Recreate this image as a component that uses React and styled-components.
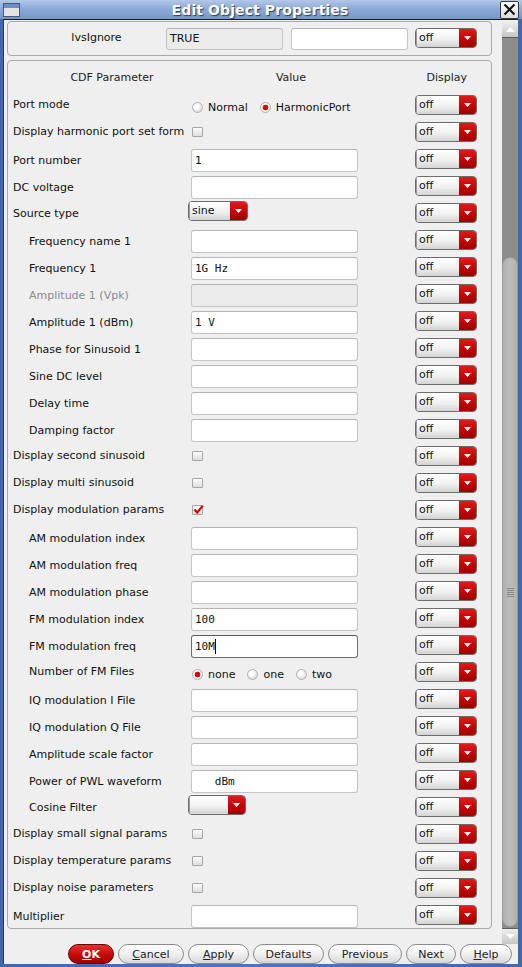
import React from "react";
import styled, { createGlobalStyle } from "styled-components";

const GlobalStyle = createGlobalStyle`
  html, body {
    margin: 0;
    padding: 0;
    background: #4470b5;
  }
  body {
    font-family: "DejaVu Sans", Verdana, sans-serif;
    font-size: 11px;
    color: #111;
  }
`;

const Window = styled.div`
  width: 522px;
  height: 967px;
  display: flex;
  flex-direction: column;
  background: linear-gradient(90deg, #3f69ad, #4a76ba 50%, #3f69ad);
  overflow: hidden;
`;

const TitleBar = styled.div`
  height: 20px;
  display: flex;
  align-items: center;
  padding: 0 3px;
  background: linear-gradient(#b3c8e8, #8eaad8 45%, #7595ca);
`;

const WinIcon = styled.div`
  width: 17px;
  height: 14px;
  box-sizing: border-box;
  border: 1px solid #4a5a78;
  background: linear-gradient(#6d8fc8 0 4px, #e4e4e4 4px);
`;

const Title = styled.div`
  flex: 1;
  text-align: center;
  color: #fff;
  font-weight: bold;
  font-size: 14px;
  text-shadow: 1px 1px 1px #2b3a55;
  letter-spacing: 0.1px;
`;

const CloseBtn = styled.div`
  width: 19px;
  height: 18px;
  box-sizing: border-box;
  border: 1px solid #3a3a3a;
  border-radius: 2px;
  background: linear-gradient(#ffffff, #dcdcdc);
  display: flex;
  align-items: center;
  justify-content: center;
`;

const Client = styled.div`
  flex: 1;
  margin: 0 4px 3px 3px;
  background: #efefef;
  border-top: 1px solid #1c1c1c;
  border-left: 1px solid #3a3a3a;
  display: flex;
  flex-direction: column;
`;

const Main = styled.div`
  height: 924px;
  display: flex;
  padding-top: 1px;
  box-sizing: border-box;
`;

const Content = styled.div`
  width: 485px;
  margin-left: 3px;
  display: flex;
  flex-direction: column;
  gap: 4px;
`;

const Panel = styled.div`
  border: 1px solid #a9a9a9;
  border-radius: 4px;
  padding: 0 5px;
`;

const TopPanel = styled(Panel)`
  height: 35px;
  box-sizing: border-box;
  display: grid;
  grid-template-columns: 153px 125px 124px 62px;
  align-items: center;
`;

const TopLabel = styled.div`
  text-align: center;
  padding-left: 14px;
  margin-top: -2px;
`;

const ParamPanel = styled(Panel)`
  padding-bottom: 0;
`;

const Header = styled.div`
  height: 30px;
  box-sizing: border-box;
  padding-top: 10px;
  line-height: 14px;
  display: grid;
  grid-template-columns: 198px 160px 1fr;
  color: #1c1c1c;
`;

const HeadCell = styled.div`
  text-align: ${(p) => p.$align || "center"};
  padding-right: ${(p) => (p.$align === "right" ? "19px" : "0")};
`;

const Row = styled.div`
  height: 27px;
  display: grid;
  grid-template-columns: 178px 224px 62px;
  align-items: center;
`;

const Label = styled.div`
  padding-left: ${(p) => (p.$indent ? "16px" : "0")};
  margin-top: ${(p) => p.$shift || 0}px;
  color: ${(p) => (p.$disabled ? "#8a8a8a" : "#111")};
  white-space: nowrap;
`;

const Field = styled.div`
  width: ${(p) => p.$w || 167}px;
  height: 23px;
  box-sizing: border-box;
  margin-top: 4px;
  border: 1px solid ${(p) => (p.$focus ? "#6e6e6e" : "#c4c4c4")};
  border-top-color: ${(p) => (p.$focus ? "#5a5a5a" : "#b4b4b4")};
  border-radius: 3px;
  background: ${(p) => (p.$disabled ? "#ebebeb" : "#fff")};
  padding-left: 3px;
  display: flex;
  align-items: center;
  font-family: ${(p) => (p.$mono ? '"DejaVu Sans Mono", monospace' : '"DejaVu Sans", sans-serif')};
  font-size: 11px;
  white-space: pre;
`;

const TopField = styled(Field)`
  width: 117px;
  height: 22px;
  margin-top: 0;
`;

const Caret = styled.span`
  width: 1px;
  height: 15px;
  background: #000;
`;

const SelectBox = styled.div`
  width: ${(p) => p.$w || 62}px;
  height: 20px;
  box-sizing: border-box;
  margin-left: ${(p) => p.$shift || 0}px;
  margin-top: ${(p) => p.$top || 0}px;
  display: flex;
  border: 1px solid #6c6c6c;
  border-radius: 4px;
  overflow: hidden;
`;

const SelectText = styled.span`
  flex: 1;
  padding-left: 2px;
  line-height: 18px;
  background: linear-gradient(#ffffff, #f1f1f1 55%, #d3d3d3);
  border-left: 1px solid #9a9a9a;
`;

const SelectArrow = styled.span`
  width: 17px;
  display: flex;
  align-items: center;
  justify-content: center;
  background: linear-gradient(#e21a1a, #c40404 55%, #9e0000);
`;

const RadioGroup = styled.div`
  display: flex;
  align-items: center;
  gap: 12px;
  margin-top: 5px;
  padding-left: 1px;
`;

const RadioItem = styled.span`
  display: flex;
  align-items: center;
  gap: 5px;
`;

const RadioDot = styled.span`
  width: 11px;
  height: 11px;
  box-sizing: border-box;
  border-radius: 50%;
  border: 1px solid #b0b0b0;
  background: ${(p) =>
    p.$on
      ? "radial-gradient(circle, #e00000 0 2.6px, #fafafa 3.2px, #e2e2e2 100%)"
      : "radial-gradient(circle at 40% 35%, #ffffff 0 2px, #e6e6e6 60%, #cfcfcf 100%)"};
`;

const CheckBox = styled.div`
  width: 11px;
  height: 10px;
  box-sizing: border-box;
  margin-left: 1px;
  margin-top: 1px;
  border: 1px solid #a6a6a6;
  border-radius: 1px;
  background: linear-gradient(#fcfcfc, #dedede);
  position: relative;
`;

const CheckMark = styled.svg`
  position: absolute;
  left: 0;
  top: -2px;
`;

const ScrollBar = styled.div`
  width: 16px;
  height: 922px;
  margin: 1px 0 0 10px;
  display: flex;
  flex-direction: column;
  background: #8c8c8c;
`;

const ScrollArrow = styled.div`
  height: 16px;
  flex: none;
  display: flex;
  align-items: center;
  justify-content: center;
  background: linear-gradient(#eeeeee, #c6c6c6);
  border-${(p) => (p.$down ? "top" : "bottom")}: 1px solid #5c5c5c;
  box-sizing: border-box;
`;

const ScrollGap = styled.div`
  height: 219px;
  flex: none;
`;

const Thumb = styled.div`
  flex: 1;
  margin-bottom: 1px;
  border-radius: 8px;
  border: 1px solid #9c9c9c;
  background: linear-gradient(90deg, #b0b0b0, #bdbdbd 50%, #b0b0b0);
  display: flex;
  align-items: center;
  justify-content: center;
`;

const Grip = styled.div`
  width: 7px;
  height: 9px;
  background: repeating-linear-gradient(#8a8a8a 0 1px, transparent 1px 2px);
`;

const ButtonBar = styled.div`
  flex: 1;
  display: flex;
  justify-content: flex-end;
  align-items: center;
  gap: 4px;
  padding-right: 6px;
`;

const Button = styled.div`
  width: ${(p) => p.$w}px;
  height: 20px;
  box-sizing: border-box;
  border: 1px solid ${(p) => (p.$primary ? "#6e0000" : "#8a8a8a")};
  border-radius: 10px;
  background: ${(p) =>
    p.$primary
      ? "linear-gradient(#e63030, #c60808 55%, #a00000)"
      : "linear-gradient(#ffffff, #f0f0f0 50%, #d6d6d6)"};
  color: ${(p) => (p.$primary ? "#fff" : "#222")};
  font-weight: ${(p) => (p.$primary ? "bold" : "normal")};
  display: flex;
  align-items: center;
  justify-content: center;
  font-size: 11px;
`;

const U = styled.span`
  text-decoration: underline;
`;

function Arrow({ color = "#fff", up }) {
  return (
    <svg width="9" height="5" viewBox="0 0 9 5">
      <path d={up ? "M0 5 L4.5 0 L9 5 Z" : "M0 0 L4.5 5 L9 0 Z"} fill={color} />
    </svg>
  );
}

function Select({ value = "off", w, shift, top }) {
  return (
    <SelectBox $w={w} $shift={shift} $top={top}>
      <SelectText>{value}</SelectText>
      <SelectArrow>
        <svg width="7" height="4" viewBox="0 0 7 4">
          <path d="M0 0 L3.5 4 L7 0 Z" fill="#fff" />
        </svg>
      </SelectArrow>
    </SelectBox>
  );
}

const rows = [
  { label: "Port mode", kind: "radio", options: ["Normal", "HarmonicPort"], on: 1 },
  { label: "Display harmonic port set form", kind: "check" },
  { label: "Port number", kind: "field", value: "1" },
  { label: "DC voltage", kind: "field" },
  { label: "Source type", kind: "select", value: "sine", w: 60 },
  { label: "Frequency name 1", kind: "field", indent: true },
  { label: "Frequency 1", kind: "field", indent: true, value: "1G Hz", mono: true },
  { label: "Amplitude 1 (Vpk)", kind: "field", indent: true, disabled: true },
  { label: "Amplitude 1 (dBm)", kind: "field", indent: true, value: "1 V", mono: true },
  { label: "Phase for Sinusoid 1", kind: "field", indent: true },
  { label: "Sine DC level", kind: "field", indent: true },
  { label: "Delay time", kind: "field", indent: true },
  { label: "Damping factor", kind: "field", indent: true },
  { label: "Display second sinusoid", kind: "check" },
  { label: "Display multi sinusoid", kind: "check" },
  { label: "Display modulation params", kind: "check", checked: true },
  { label: "AM modulation index", kind: "field", indent: true },
  { label: "AM modulation freq", kind: "field", indent: true },
  { label: "AM modulation phase", kind: "field", indent: true },
  { label: "FM modulation index", kind: "field", indent: true, value: "100", mono: true },
  { label: "FM modulation freq", kind: "field", indent: true, value: "10M", mono: true, focus: true },
  { label: "Number of FM Files", kind: "radio", indent: true, options: ["none", "one", "two"], on: 0 },
  { label: "IQ modulation I File", kind: "field", indent: true },
  { label: "IQ modulation Q File", kind: "field", indent: true },
  { label: "Amplitude scale factor", kind: "field", indent: true },
  { label: "Power of PWL waveform", kind: "field", indent: true, value: "   dBm", mono: true },
  { label: "Cosine Filter", kind: "select", indent: true, value: "", w: 58 },
  { label: "Display small signal params", kind: "check" },
  { label: "Display temperature params", kind: "check" },
  { label: "Display noise parameters", kind: "check" },
  { label: "Multiplier", kind: "field" },
];

function ValueCell({ row }) {
  if (row.kind === "field") {
    return (
      <Field $mono={row.mono} $disabled={row.disabled} $focus={row.focus}>
        {row.value}
        {row.focus && <Caret />}
      </Field>
    );
  }
  if (row.kind === "select") {
    return <Select value={row.value} w={row.w} shift={-3} top={-3} />;
  }
  if (row.kind === "check") {
    return (
      <div>
        <CheckBox>
          {row.checked && (
            <CheckMark width="11" height="11" viewBox="0 0 11 11">
              <path d="M1.5 5.5 L4.2 8.6 L9.8 1.6" fill="none" stroke="#d40000" strokeWidth="2.2" />
            </CheckMark>
          )}
        </CheckBox>
      </div>
    );
  }
  return (
    <RadioGroup>
      {row.options.map((o, i) => (
        <RadioItem key={o}>
          <RadioDot $on={i === row.on} />
          {o}
        </RadioItem>
      ))}
    </RadioGroup>
  );
}

export default function App() {
  return (
    <>
      <GlobalStyle />
      <Window>
        <TitleBar>
          <WinIcon />
          <Title>Edit Object Properties</Title>
          <CloseBtn>
            <svg width="13" height="13" viewBox="0 0 13 13">
              <path d="M1.5 1.5 L11.5 11.5 M11.5 1.5 L1.5 11.5" stroke="#111" strokeWidth="2" />
            </svg>
          </CloseBtn>
        </TitleBar>
        <Client>
          <Main>
            <Content>
              <TopPanel>
                <TopLabel>lvsIgnore</TopLabel>
                <TopField $disabled>TRUE</TopField>
                <TopField />
                <Select top={-2} />
              </TopPanel>
              <ParamPanel>
                <Header>
                  <HeadCell>CDF Parameter</HeadCell>
                  <HeadCell>Value</HeadCell>
                  <HeadCell $align="right">Display</HeadCell>
                </Header>
                {rows.map((row) => (
                  <Row key={row.label}>
                    <Label
                      $indent={row.indent}
                      $disabled={row.disabled}
                      $shift={row.kind === "field" ? 4 : row.kind === "select" ? 2 : 0}
                    >
                      {row.label}
                    </Label>
                    <ValueCell row={row} />
                    <Select />
                  </Row>
                ))}
              </ParamPanel>
            </Content>
            <ScrollBar>
              <ScrollArrow>
                <Arrow up />
              </ScrollArrow>
              <ScrollGap />
              <Thumb>
                <Grip />
              </Thumb>
              <ScrollArrow $down>
                <Arrow />
              </ScrollArrow>
            </ScrollBar>
          </Main>
          <ButtonBar>
            <Button $primary $w={46}>
              <U>O</U>K
            </Button>
            <Button $w={66}>
              <U>C</U>ancel
            </Button>
            <Button $w={61}>
              <U>A</U>pply
            </Button>
            <Button $w={71}>Defaults</Button>
            <Button $w={74}>Previous</Button>
            <Button $w={50}>Next</Button>
            <Button $w={52}>
              <U>H</U>elp
            </Button>
          </ButtonBar>
        </Client>
      </Window>
    </>
  );
}
